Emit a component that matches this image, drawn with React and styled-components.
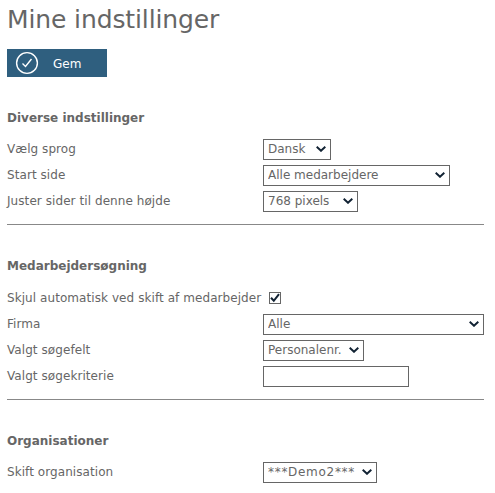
import React from 'react'
import styled, { createGlobalStyle } from 'styled-components'

const GlobalStyle = createGlobalStyle`
  html, body {
    margin: 0;
    background: #fff;
  }
`

const CHEVRON = "url(\"data:image/svg+xml,%3Csvg xmlns='http://www.w3.org/2000/svg' width='10' height='6' viewBox='0 0 10 6'%3E%3Cpath d='M.7.7 5 4.8 9.3.7' fill='none' stroke='%23112233' stroke-width='1.9'/%3E%3C/svg%3E\")"

const Page = styled.div`
  width: 495px;
  height: 493px;
  overflow: hidden;
  box-sizing: border-box;
  padding: 5px 11px 0 7px;
  color: #666;
  font-family: "DejaVu Sans", Verdana, sans-serif;
  font-size: 12px;
  letter-spacing: 0.07px;
`

const Title = styled.h1`
  margin: 0;
  height: 30px;
  color: #666;
  font-size: 25px;
  font-weight: 400;
  line-height: 30px;
  letter-spacing: -0.12px;
`

const SaveButton = styled.button`
  display: flex;
  width: 100px;
  height: 28px;
  align-items: center;
  margin: 14px 0 0;
  padding: 0 0 0 8px;
  border: 0;
  background: #2f5f7f;
  color: #fff;
  font-family: inherit;
  font-size: 12px;
`

const SaveLabel = styled.span`
  margin-left: 14px;
  padding-top: 1px;
`

const Section = styled.section`
  padding-bottom: ${({ $last }) => ($last ? 0 : '10px')};
  border-bottom: ${({ $last }) => ($last ? 'none' : '1px solid #888')};
`

const Heading = styled.h2`
  height: 16px;
  margin: 33px 0 10px;
  color: #666;
  font-size: 12px;
  font-weight: 700;
  line-height: 16px;
  letter-spacing: 0;
`

const Row = styled.div`
  display: grid;
  grid-template-columns: 256px 1fr;
  height: 26px;
  align-items: center;
`

const Label = styled.label`
  white-space: nowrap;
`

const Select = styled.select`
  display: block;
  width: ${({ $width }) => $width}px;
  height: 21px;
  box-sizing: border-box;
  padding: 0 0 0 4px;
  border: 1px solid #666;
  border-radius: 0;
  appearance: none;
  background: #fff ${CHEVRON} no-repeat right 4px center;
  color: #666;
  font-family: inherit;
  font-size: 12px;
  letter-spacing: ${({ $spacing }) => $spacing || 0}px;
`

const TextInput = styled.input`
  display: block;
  width: 146px;
  height: 21px;
  box-sizing: border-box;
  padding: 0 2px;
  border: 1px solid #666;
  background: #fff;
`

const CheckboxRow = styled.div`
  display: flex;
  height: 27px;
  align-items: center;
  gap: 8px;
`

const CheckBox = styled.span`
  display: flex;
  width: 12px;
  height: 12px;
  align-items: center;
  justify-content: center;
  box-sizing: border-box;
  border: 1px solid #666;
  background: #fff;
`

const CheckIcon = () => (
  <svg width="24" height="24" viewBox="0 0 24 24" fill="none" stroke="#fff">
    <circle cx="12" cy="12" r="10.4" strokeWidth="1.4" />
    <path d="M7.5 12.5l3 3 6-7.5" strokeWidth="1.4" />
  </svg>
)

const Tick = () => (
  <svg width="10" height="10" viewBox="0 0 10 10" fill="none" stroke="#112233">
    <path d="M1 4.8l2.8 3L9 1.2" strokeWidth="2" />
  </svg>
)

const Choice = ({ width, value, spacing }) => (
  <div>
    <Select $width={width} $spacing={spacing} defaultValue={value}>
      <option>{value}</option>
    </Select>
  </div>
)

export default function App () {
  return (
    <Page>
      <GlobalStyle />
      <Title>Mine indstillinger</Title>
      <SaveButton type="button">
        <CheckIcon />
        <SaveLabel>Gem</SaveLabel>
      </SaveButton>

      <Section>
        <Heading>Diverse indstillinger</Heading>
        <Row><Label>Vælg sprog</Label><Choice width={68} value="Dansk" /></Row>
        <Row><Label>Start side</Label><Choice width={187} value="Alle medarbejdere" /></Row>
        <Row><Label>Juster sider til denne højde</Label><Choice width={95} value="768 pixels" /></Row>
      </Section>

      <Section>
        <Heading>Medarbejdersøgning</Heading>
        <CheckboxRow>
          <Label>Skjul automatisk ved skift af medarbejder</Label>
          <CheckBox><Tick /></CheckBox>
        </CheckboxRow>
        <Row><Label>Firma</Label><Choice width={221} value="Alle" /></Row>
        <Row><Label>Valgt søgefelt</Label><Choice width={101} value="Personalenr." /></Row>
        <Row><Label>Valgt søgekriterie</Label><div><TextInput type="text" /></div></Row>
      </Section>

      <Section $last>
        <Heading>Organisationer</Heading>
        <Row><Label>Skift organisation</Label><Choice width={114} spacing={0.7} value="***Demo2***" /></Row>
      </Section>
    </Page>
  )
}
